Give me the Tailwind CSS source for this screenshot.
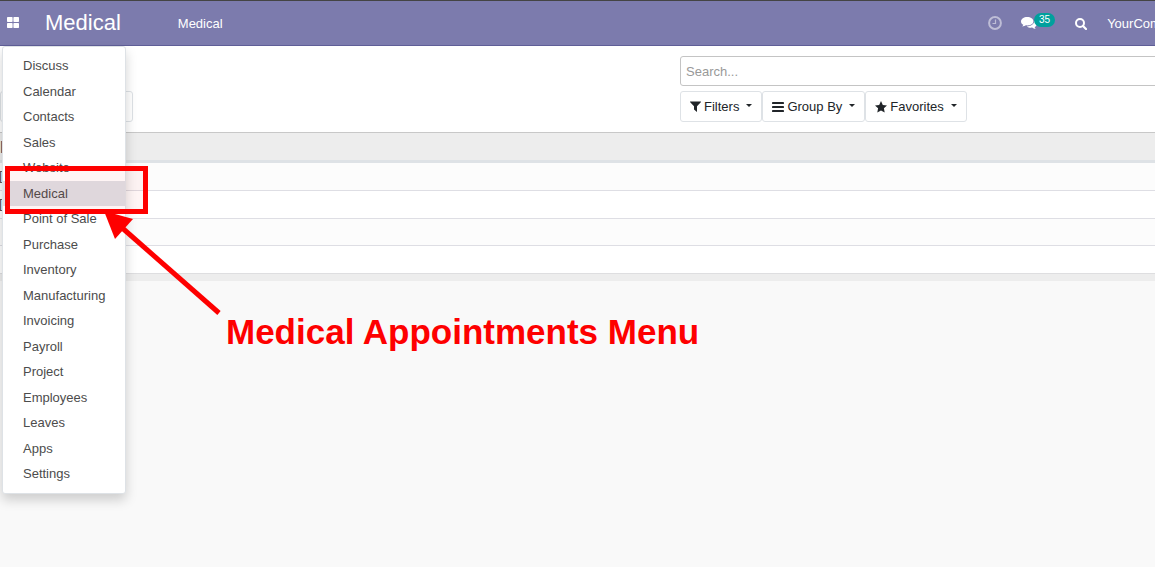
<!DOCTYPE html>
<html lang="en">
<head>
<meta charset="utf-8">
<meta name="viewport" content="width=device-width, initial-scale=1">
<title>Medical</title>
<script src="https://cdn.jsdelivr.net/npm/@tailwindcss/browser@4"></script>
</head>
<body class="relative min-h-screen overflow-hidden bg-[#f9f9f9] font-['Liberation_Sans',Arial,sans-serif] text-[13px] leading-5 text-[#4c4c4c]">

<header class="flex h-[46px] items-center overflow-hidden border-t border-b border-t-[#444] border-b-[#5f5e97] bg-[#7c7bad] text-white">
  <button type="button" aria-label="Applications" class="ml-[7px] shrink-0">
    <svg class="block h-3 w-3" viewBox="0 0 12 12" fill="currentColor"><rect width="5.6" height="5" rx=".7"/><rect x="6.4" width="5.6" height="5" rx=".7"/><rect y="6" width="5.6" height="5" rx=".7"/><rect x="6.4" y="6" width="5.6" height="5" rx=".7"/></svg>
  </button>
  <a href="#" class="ml-[26px] text-[22px] leading-8">Medical</a>
  <nav class="ml-[57px] pt-[2px]"><a href="#">Medical</a></nav>
  <div class="ml-auto flex w-[167px] shrink-0 items-center pt-[2px] whitespace-nowrap">
    <button type="button" aria-label="Activities" class="shrink-0 opacity-50">
      <svg class="mb-[3px] block h-[14px] w-[14px]" viewBox="0 0 14 14" fill="none" stroke="currentColor"><circle cx="7" cy="7" r="5.9" stroke-width="2"/><path d="M7.5 3.500v4H4.500" stroke-width="1.200"/></svg>
    </button>
    <button type="button" aria-label="Messages" class="ml-[19px] flex shrink-0 items-center">
      <svg class="mb-[2px] block h-[14px] w-4" viewBox="0 0 16 14" fill="currentColor"><path d="M6.200 1C2.800 1 0 2.900 0 5.400c0 1.400.9 2.600 2.300 3.400-.3.8-.7 1.200-1.100 1.700 1.500 0 2.700-.6 3.600-1.200.5.1.9.1 1.400.1 3.500 0 6.200-1.800 6.200-4.200S9.700 1 6.200 1Z"/><path d="M13.300 4.200c.4 3.500-3.200 6.200-7.500 6.200 1.200 1 3.300 1.500 5.400 1.200.9.700 2.200 1.300 3.600 1.300-.5-.5-.9-1-1.100-1.700C16.400 9.500 16.700 6 13.300 4.200Z"/></svg>
      <span class="-ml-[3px] mb-[8px] h-[14px] rounded-full bg-[#00a09d] px-[5px] text-[10px] leading-[14px]">35</span>
    </button>
    <button type="button" aria-label="Search" class="ml-5 shrink-0">
      <svg class="block h-3 w-3" viewBox="0 0 12 12" fill="none" stroke="currentColor"><circle cx="5" cy="5" r="4" stroke-width="2"/><path d="m8 8 3 3" stroke-width="2.200" stroke-linecap="round"/></svg>
    </button>
    <a href="#" class="ml-5">YourCompany</a>
  </div>
</header>

<section class="flex h-[87px] border-b border-[#c8c8c8] bg-white">
  <div class="flex flex-1 items-end pb-[10px]"><button type="button" aria-label="Import" class="h-[31px] w-[133px] rounded-[3px] border border-[#dee2e6]"></button></div>
  <div class="w-[475px] shrink-0 overflow-hidden pt-[10px]">
    <input type="text" aria-label="Search" placeholder="Search..." class="block h-[30px] w-[490px] rounded-[3px] border border-[#c4c4c4] px-[5px] text-[13px] placeholder:text-[#999]">
    <div class="mt-[5px] flex text-[#212529]">
      <button type="button" class="flex h-[31px] items-center rounded-[3px] border border-[#dee2e6] px-[9px]">
        <svg class="mr-[3px] h-[11px] w-[11px]" viewBox="0 0 11 11" fill="currentColor"><path d="M.3.500h10.400c.3 0 .4.500.1.700L7 5.200V11L4 8.500V5.200L.2 1.200C-.1.900 0 .5.300.5Z"/></svg>Filters
        <svg class="mb-[2px] ml-[7px] h-[3px] w-[6px]" viewBox="0 0 6 3" fill="currentColor"><path d="M0 0h6L3 3Z"/></svg>
      </button>
      <button type="button" class="flex h-[31px] items-center rounded-[3px] border border-[#dee2e6] px-[9px]">
        <svg class="mr-[3px] h-[10px] w-3" viewBox="0 0 12 10" fill="currentColor"><rect y="0" width="12" height="2" rx=".4"/><rect y="4" width="12" height="2" rx=".4"/><rect y="8" width="12" height="2" rx=".4"/></svg>Group By
        <svg class="mb-[2px] ml-[7px] h-[3px] w-[6px]" viewBox="0 0 6 3" fill="currentColor"><path d="M0 0h6L3 3Z"/></svg>
      </button>
      <button type="button" class="flex h-[31px] items-center rounded-[3px] border border-[#dee2e6] px-[9px]">
        <svg class="mr-[3px] h-3 w-3" viewBox="0 0 12 12" fill="currentColor"><path d="m6 0 1.800 3.900 4.200.5-3.100 2.900.8 4.300L6 9.500l-3.700 2.100.8-4.300L0 4.400l4.200-.5Z"/></svg>Favorites
        <svg class="mb-[2px] ml-[7px] h-[3px] w-[6px]" viewBox="0 0 6 3" fill="currentColor"><path d="M0 0h6L3 3Z"/></svg>
      </button>
    </div>
  </div>
</section>

<table class="w-full border-collapse text-left leading-4" aria-label="Appointments">
  <thead><tr class="h-7 border-b-3 border-[#dee2e6] bg-[#ededed]"><th class="p-0 font-normal" scope="col">|</th></tr></thead>
  <tbody>
    <tr class="h-[29px] border-b border-[#dedee4] bg-[#fcfcfc]"><td class="p-0"><span class="-ml-px">[</span></td></tr>
    <tr class="h-7 border-b border-[#dedee4] bg-white"><td class="p-0"><span class="-ml-px">[</span></td></tr>
    <tr class="h-[27px] border-b border-[#dedee4] bg-[#fcfcfc]"><td class="p-0"></td></tr>
    <tr class="h-7 border-b border-[#dedee0] bg-white"><td class="p-0"></td></tr>
  </tbody>
  <tfoot><tr class="h-2 bg-[#ededed]"><td class="p-0"></td></tr></tfoot>
</table>

<nav aria-label="Applications" class="absolute top-[46px] left-[2px] w-[124px] rounded-[3px] border border-[#dee2e6] bg-white py-[6px] shadow-[0_6px_12px_rgba(0,0,0,0.175)]">
  <ul>
    <li class="flex h-[26px] items-center px-5"><a href="#">Discuss</a></li>
    <li class="flex h-[25px] items-center px-5"><a href="#">Calendar</a></li>
    <li class="flex h-[26px] items-center px-5"><a href="#">Contacts</a></li>
    <li class="flex h-[25px] items-center px-5"><a href="#">Sales</a></li>
    <li class="flex h-[26px] items-center px-5"><a href="#">Website</a></li>
    <li class="flex h-[25px] items-center bg-[#dee0e5] px-5"><a href="#">Medical</a></li>
    <li class="flex h-[26px] items-center px-5"><a href="#">Point of Sale</a></li>
    <li class="flex h-[25px] items-center px-5"><a href="#">Purchase</a></li>
    <li class="flex h-[26px] items-center px-5"><a href="#">Inventory</a></li>
    <li class="flex h-[25px] items-center px-5"><a href="#">Manufacturing</a></li>
    <li class="flex h-[26px] items-center px-5"><a href="#">Invoicing</a></li>
    <li class="flex h-[25px] items-center px-5"><a href="#">Payroll</a></li>
    <li class="flex h-[26px] items-center px-5"><a href="#">Project</a></li>
    <li class="flex h-[25px] items-center px-5"><a href="#">Employees</a></li>
    <li class="flex h-[26px] items-center px-5"><a href="#">Leaves</a></li>
    <li class="flex h-[25px] items-center px-5"><a href="#">Apps</a></li>
    <li class="flex h-[26px] items-center px-5"><a href="#">Settings</a></li>
  </ul>
</nav>

<div class="pointer-events-none absolute top-[166px] left-[5px] h-[48px] w-[143px] border-5 border-[#fe0000] bg-[#ff0000]/4"></div>
<svg class="pointer-events-none absolute top-[210px] left-[100px] h-[110px] w-[130px]" viewBox="0 0 130 110" aria-hidden="true"><path d="M20 16 119 103" stroke="#fe0000" stroke-width="5"/><path d="m4 1 29 8-18 20Z" fill="#fe0000"/></svg>
<p class="pointer-events-none absolute top-[312px] left-[226px] text-[35px] leading-10 font-bold whitespace-nowrap text-[#fe0000]">Medical Appointments Menu</p>
</body>
</html>
